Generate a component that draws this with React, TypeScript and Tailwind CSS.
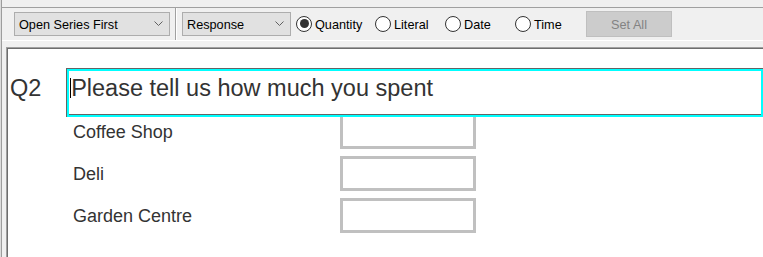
import React from 'react';

const font = { fontFamily: '"Liberation Sans", Arial, sans-serif' };

// Small down chevron used in the combo boxes
const Chevron = () => (
  <svg width="9" height="6" viewBox="0 0 9 6" className="shrink-0">
    <path d="M0.5 0.5 L4.5 4.5 L8.5 0.5" fill="none" stroke="#606060" strokeWidth="1" />
  </svg>
);

const Combo = ({ label, width }: { label: string; width: string }) => (
  <div className={`${width} h-[24px] flex items-center justify-between pl-[4px] pr-[6px] bg-[#e1e1e1] border border-[#adadad] text-[12.7px] text-black`}>
    <span className="pt-[3px]">{label}</span>
    <Chevron />
  </div>
);

const Radio = ({ label, checked, width }: { label: string; checked?: boolean; width: string }) => (
  <div className={`${width} flex items-center shrink-0`}>
    <div className="w-[16px] h-[16px] rounded-full border border-[#333333] bg-white flex items-center justify-center">
      {checked && <div className="w-[9px] h-[9px] rounded-full bg-[#333333]" />}
    </div>
    <span className="ml-[3px] pt-[3px] text-[12.7px] text-black">{label}</span>
  </div>
);

const rows = ['Coffee Shop', 'Deli', 'Garden Centre'];

export default function App() {
  return (
    <div className="w-[763px] h-[257px] overflow-hidden bg-[#f0f0f0] flex" style={font}>
      <div className="w-[1px] bg-[#dcdcdc]" />
      <div className="w-[1px] bg-[#9d9d9d]" />
      <div className="flex-1 flex flex-col min-w-0">
        <div className="h-[7px]" />
        <div className="h-[1px] bg-[#a0a0a0]" />

        {/* Toolbar */}
        <div className="h-[32px] flex items-center pl-[12px]">
          <Combo label="Open Series First" width="w-[156px]" />
          <div className="ml-[5px] h-[32px] w-[2px] flex">
            <div className="w-[1px] bg-[#a0a0a0]" />
            <div className="w-[1px] bg-white" />
          </div>
          <div className="ml-[5px]">
            <Combo label="Response" width="w-[109px]" />
          </div>
          <div className="ml-[5px] flex items-center">
            <Radio label="Quantity" checked width="w-[79px]" />
            <Radio label="Literal" width="w-[70px]" />
            <Radio label="Date" width="w-[70px]" />
            <Radio label="Time" width="w-[71px]" />
          </div>
          <button className="w-[86px] h-[26px] pt-[3px] bg-[#cccccc] border border-[#bfbfbf] text-[12.7px] text-[#838383]">
            Set All
          </button>
        </div>

        <div className="h-[1px] bg-white" />
        <div className="h-[6px]" />

        {/* Question panel */}
        <div className="ml-[4px] flex-1 border-t border-l border-[#a0a0a0]">
          <div className="h-full border-t border-l border-[#6d6d6d] bg-white pl-[2px] pt-[19px] text-[#333333]">
            <div className="flex items-start">
              <div className="w-[58px] pt-[7px] text-[23.5px] leading-[27px]">Q2</div>
              <div className="relative z-10 w-[720px] border-t border-l border-[#646464]">
                <div className="border-2 border-[#00ffff]">
                  <div className="h-[44px] border-b border-[#646464] bg-white pl-[2px] pt-[4px] text-[23.5px] leading-[27px] flex items-start">
                    <span className="inline-block w-[1px] h-[20px] mt-[3px] -ml-[1px] bg-black" />
                    <span>Please tell us how much you spent</span>
                  </div>
                </div>
              </div>
            </div>

            <div className="-mt-[3px] flex flex-col gap-[7px]">
              {rows.map((r) => (
                <div key={r} className="flex items-center pl-[63px] h-[35px]">
                  <div className="w-[267px] pt-[2px] text-[18px]">{r}</div>
                  <div className="w-[136px] h-[35px] border-[3px] border-[#c0c0c0] bg-white" />
                </div>
              ))}
            </div>
          </div>
        </div>
      </div>
    </div>
  );
}
